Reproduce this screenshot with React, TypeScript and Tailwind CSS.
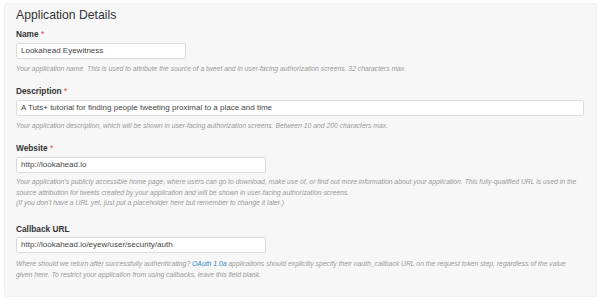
import React from "react";

const font = { fontFamily: '"Liberation Sans", Arial, sans-serif' };

function Label({ text, required }: { text: string; required?: boolean }) {
  return (
    <div className="text-[8.3px] leading-[12px] font-bold text-[#333]">
      {text}
      {required && <span className="text-[#e0443a] font-normal"> *</span>}
    </div>
  );
}

function Input({ value, width }: { value: string; width: string }) {
  return (
    <div
      className={`${width} h-[16px] mt-[2.5px] bg-white border border-[#dcdcdc] rounded-[2px] flex items-center pl-[4px] text-[8px] text-[#444]`}
    >
      {value}
    </div>
  );
}

export default function App() {
  return (
    <div className="w-[600px] h-[304px] bg-white pl-[4px] pt-[3px]" style={font}>
      <div className="w-[593px] h-[294px] bg-[#f7f7f7] border border-[#f0f0f0] rounded-[3px] px-[11px] pt-[4px]">
        <div className="text-[12.2px] leading-[15px] text-[#333]">Application Details</div>

        <div className="mt-[5px]">
          <Label text="Name" required />
          <Input value="Lookahead Eyewitness" width="w-[170px]" />
          <div className="mt-[4.5px] text-[6.8px] leading-[11px] italic text-[#999]">
            Your application name. This is used to attribute the source of a tweet and in user-facing authorization screens. 32 characters max.
          </div>
        </div>

        <div className="mt-[11px]">
          <Label text="Description" required />
          <Input value="A Tuts+ tutorial for finding people tweeting proximal to a place and time" width="w-[568px]" />
          <div className="mt-[4.5px] text-[6.8px] leading-[11px] italic text-[#999]">
            Your application description, which will be shown in user-facing authorization screens. Between 10 and 200 characters max.
          </div>
        </div>

        <div className="mt-[11px]">
          <Label text="Website" required />
          <Input value="http://lookahead.io" width="w-[250px]" />
          <div className="mt-[4.5px] text-[6.8px] leading-[10.5px] italic text-[#999]">
            Your application's publicly accessible home page, where users can go to download, make use of, or find out more information about your application. This fully-qualified URL is used in the source attribution for tweets created by your application and will be shown in user-facing authorization screens.
            <br />
            (If you don't have a URL yet, just put a placeholder here but remember to change it later.)
          </div>
        </div>

        <div className="mt-[14px]">
          <Label text="Callback URL" />
          <Input value="http://lookahead.io/eyew/user/security/auth" width="w-[250px]" />
          <div className="mt-[4.5px] w-[562px] text-[6.8px] leading-[11px] italic text-[#999]">
            Where should we return after successfully authenticating? <span className="text-[#2a8ac0]">OAuth 1.0a</span> applications should explicitly specify their oauth_callback URL on the request token step, regardless of the value given here. To restrict your application from using callbacks, leave this field blank.
          </div>
        </div>
      </div>
    </div>
  );
}
